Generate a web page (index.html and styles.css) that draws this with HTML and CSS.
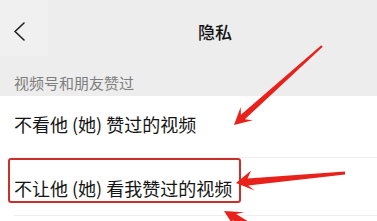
FILE: index.html
```html
<!DOCTYPE html>
<html lang="zh-CN">
<head>
    <meta charset="UTF-8">
    <meta name="viewport" content="width=device-width, initial-scale=1.0">
    <title>隐私</title>
    <link rel="stylesheet" href="styles.css">
</head>
<body>
    <div class="screen">
        <header class="nav">
            <div class="back">
                <svg width="14" height="22" viewBox="0 0 14 22">
                    <polyline points="10,2 1,10.5 10,19" fill="none" stroke="#1e1e1e" stroke-width="1.6" stroke-linecap="round" stroke-linejoin="round"/>
                </svg>
            </div>
            <h1 class="title">隐私</h1>
        </header>
        <div class="section-label">视频号和朋友赞过</div>
        <div class="list">
            <div class="row row-first">不看他 (她) 赞过的视频</div>
            <div class="row row-second">不让他 (她) 看我赞过的视频</div>
        </div>

        <!-- annotations -->
        <div class="mark"></div>
        <svg class="arrows" width="377" height="221" viewBox="0 0 377 221">
            <polygon points="322.7,46.7 244.9,119.2 252.7,120.3 234,125 240.7,106.9 240.9,114.8 321.3,45.3"/>
            <polygon points="345.1,174.6 248.2,185.4 254.7,190.4 236,183 251.1,170.4 247.6,178.4 344.9,171.4"/>
            <polygon points="266.5,232.4 236.1,214.1 244.0,212.3 224,211 235.0,227.9 232.6,220.1 263.5,237.6"/>
        </svg>
    </div>
</body>
</html>
```

FILE: styles.css
```css
body {
    margin: 0;
    padding: 0;
    background-color: #ededed;
    font-family: "Noto Sans CJK SC", "Noto Sans", sans-serif;
    color: #1a1a1a;
}
.screen {
    position: relative;
    width: 377px;
    height: 221px;
    overflow: hidden;
    background-color: #ededed;
}
.nav {
    display: flex;
    align-items: center;
    height: 64px;
}
.back {
    display: flex;
    align-items: center;
    width: 48px;
    height: 56px;
    padding-left: 14px;
    box-sizing: border-box;
    background-color: #f0f0f0;
    margin-top: -8px;
    padding-top: 8px;
}
.title {
    margin: 0 0 0 150px;
    font-size: 17px;
    font-weight: 500;
    line-height: 24px;
    color: #111;
}
.section-label {
    height: 32px;
    box-sizing: border-box;
    padding: 9px 0 0 14px;
    font-size: 15px;
    line-height: 20px;
    color: #7d7d7d;
}
.list {
    background-color: #fff;
    padding-left: 14px;
    padding-bottom: 20px;
}
.row {
    font-size: 18px;
    line-height: 24px;
    color: #141414;
    border-bottom: 1px solid #efefef;
}
.row-first {
    padding: 16px 0 21px;
}
.row-second {
    padding: 18px 0 15px;
}
.mark {
    position: absolute;
    left: 8px;
    top: 158px;
    width: 229px;
    height: 41px;
    border: 2px solid #c9302a;
    border-radius: 3px;
}
.arrows {
    position: absolute;
    left: 0;
    top: 0;
}
.arrows polygon {
    fill: #e8211b;
}
```
